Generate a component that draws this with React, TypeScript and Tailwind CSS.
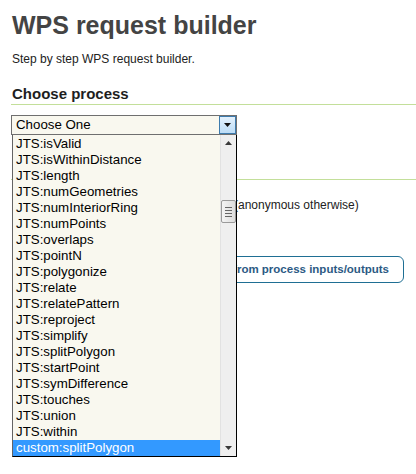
import { useState } from 'react'

const processes = [
  'JTS:isValid',
  'JTS:isWithinDistance',
  'JTS:length',
  'JTS:numGeometries',
  'JTS:numInteriorRing',
  'JTS:numPoints',
  'JTS:overlaps',
  'JTS:pointN',
  'JTS:polygonize',
  'JTS:relate',
  'JTS:relatePattern',
  'JTS:reproject',
  'JTS:simplify',
  'JTS:splitPolygon',
  'JTS:startPoint',
  'JTS:symDifference',
  'JTS:touches',
  'JTS:union',
  'JTS:within',
  'custom:splitPolygon',
]

function ProcessList({ selected }: { selected: string }) {
  return (
    <div className="absolute left-[12px] top-[135px] z-10 flex h-[322px] w-[225px] border-l border-l-[#646464] border-r border-r-black border-b border-b-black bg-[#f9f8ef]">
      <ul className="flex-1 pt-[1px]">
        {processes.map((name) => (
          <li
            key={name}
            className={
              name === selected
                ? 'h-[16px] pl-[3px] leading-[16px] bg-[#3399ff] text-white'
                : 'h-[16px] pl-[3px] leading-[16px] text-black'
            }
          >
            {name}
          </li>
        ))}
      </ul>

      {/* Scrollbar */}
      <div className="relative w-[16px] bg-[#efefef] border-l border-l-[#e2e2e2]">
        <svg className="absolute left-[4px] top-[6px]" width="7" height="4" viewBox="0 0 7 4">
          <path d="M0 4 L3.5 0 L7 4 Z" fill="#3a3a3a" />
        </svg>
        <div className="absolute left-[0px] top-[65px] flex h-[23px] w-[15px] flex-col items-center justify-center gap-[2px] rounded-[2px] border border-[#9a9a9a] bg-gradient-to-r from-[#f4f4f4] to-[#dcdcdc]">
          <span className="block h-[1px] w-[7px] bg-[#666]" />
          <span className="block h-[1px] w-[7px] bg-[#666]" />
          <span className="block h-[1px] w-[7px] bg-[#666]" />
          <span className="block h-[1px] w-[7px] bg-[#666]" />
        </div>
        <svg className="absolute left-[4px] bottom-[6px]" width="7" height="4" viewBox="0 0 7 4">
          <path d="M0 0 L3.5 4 L7 0 Z" fill="#3a3a3a" />
        </svg>
      </div>
    </div>
  )
}

export default function App() {
  const [selected] = useState('custom:splitPolygon')

  return (
    <div className="relative h-[474px] w-[416px] overflow-hidden bg-white pl-[11px] font-['Liberation_Sans',Arial,sans-serif] text-[13.3px]">
      <h1 className="pt-[10px] pl-[1px] text-[25px] font-bold leading-[30px] text-[#444444]">
        WPS request builder
      </h1>
      <p className="mt-[11px] pl-[1px] text-[12px] leading-[16px] text-[#222222]">
        Step by step WPS request builder.
      </p>

      {/* Choose process */}
      <h3 className="mt-[18px] border-b border-b-[#c3df9a] pb-[1px] pl-[1px] text-[15px] font-bold leading-[18px] text-[#1e1e1e]">
        Choose process
      </h3>
      <div className="mt-[10px] flex h-[20px] w-[226px] border border-[#6f6f6f] bg-[#f9f8ef]">
        <span className="flex-1 pl-[4px] leading-[18px] text-black">Choose One</span>
        <span className="flex w-[17px] items-center justify-center border border-[#3d7bad] bg-gradient-to-b from-[#e3f1fd] to-[#bcdcf6]">
          <svg width="7" height="4" viewBox="0 0 7 4">
            <path d="M0 0 L3.5 4 L7 0 Z" fill="#111" />
          </svg>
        </span>
      </div>

      {/* Covered by the open list */}
      <div className="mt-[26px] h-[19px] border-b border-b-[#c3df9a]" />
      <label className="mt-[16px] flex items-center pl-[1px] text-[12px] leading-[16px] text-[#222222]">
        <span className="w-[222px]">
          <input type="checkbox" className="h-[13px] w-[13px]" />
        </span>
        (anonymous otherwise)
      </label>

      <button className="mt-[43px] ml-[1px] h-[27px] w-[392px] rounded-[6px] border border-[#1f6f94] bg-white pr-[14px] text-right text-[11.5px] font-bold text-[#2c5a84]">
        from process inputs/outputs
      </button>

      <ProcessList selected={selected} />
    </div>
  )
}
